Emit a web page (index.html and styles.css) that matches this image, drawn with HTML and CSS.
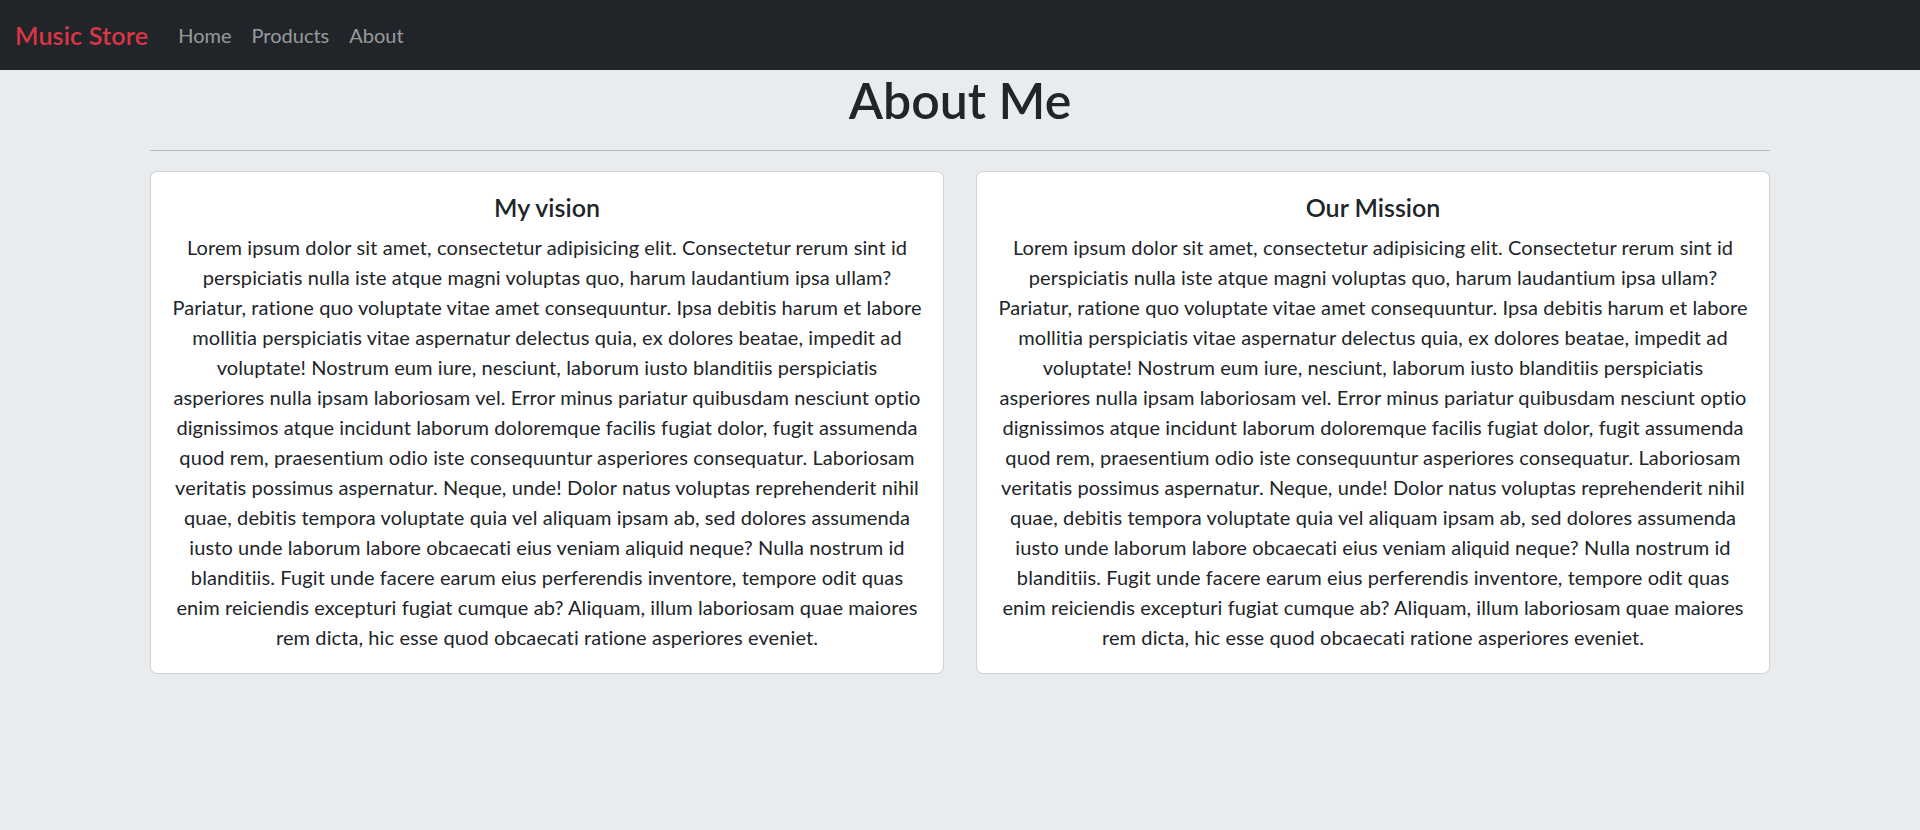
FILE: index.html
```html
<!DOCTYPE html>
<html lang="en">
<head>
<meta charset="utf-8">
<title>About - Music Store</title>
<link rel="stylesheet" href="styles.css">
</head>
<body>
<nav class="navbar">
  <a class="brand" href="#">Music Store</a>
  <ul class="nav-links">
    <li><a href="#">Home</a></li>
    <li><a href="#">Products</a></li>
    <li><a href="#">About</a></li>
  </ul>
</nav>
<main class="container">
  <h1 class="page-title">About Me</h1>
  <hr class="divider">
  <div class="cards">
    <section class="card">
      <h5 class="card-title">My vision</h5>
      <p class="card-text">Lorem ipsum dolor sit amet, consectetur adipisicing elit. Consectetur rerum sint id<br>
perspiciatis nulla iste atque magni voluptas quo, harum laudantium ipsa ullam?<br>
Pariatur, ratione quo voluptate vitae amet consequuntur. Ipsa debitis harum et labore<br>
mollitia perspiciatis vitae aspernatur delectus quia, ex dolores beatae, impedit ad<br>
voluptate! Nostrum eum iure, nesciunt, laborum iusto blanditiis perspiciatis<br>
asperiores nulla ipsam laboriosam vel. Error minus pariatur quibusdam nesciunt optio<br>
dignissimos atque incidunt laborum doloremque facilis fugiat dolor, fugit assumenda<br>
quod rem, praesentium odio iste consequuntur asperiores consequatur. Laboriosam<br>
veritatis possimus aspernatur. Neque, unde! Dolor natus voluptas reprehenderit nihil<br>
quae, debitis tempora voluptate quia vel aliquam ipsam ab, sed dolores assumenda<br>
iusto unde laborum labore obcaecati eius veniam aliquid neque? Nulla nostrum id<br>
blanditiis. Fugit unde facere earum eius perferendis inventore, tempore odit quas<br>
enim reiciendis excepturi fugiat cumque ab? Aliquam, illum laboriosam quae maiores<br>
rem dicta, hic esse quod obcaecati ratione asperiores eveniet.</p>
    </section>
    <section class="card">
      <h5 class="card-title">Our Mission</h5>
      <p class="card-text">Lorem ipsum dolor sit amet, consectetur adipisicing elit. Consectetur rerum sint id<br>
perspiciatis nulla iste atque magni voluptas quo, harum laudantium ipsa ullam?<br>
Pariatur, ratione quo voluptate vitae amet consequuntur. Ipsa debitis harum et labore<br>
mollitia perspiciatis vitae aspernatur delectus quia, ex dolores beatae, impedit ad<br>
voluptate! Nostrum eum iure, nesciunt, laborum iusto blanditiis perspiciatis<br>
asperiores nulla ipsam laboriosam vel. Error minus pariatur quibusdam nesciunt optio<br>
dignissimos atque incidunt laborum doloremque facilis fugiat dolor, fugit assumenda<br>
quod rem, praesentium odio iste consequuntur asperiores consequatur. Laboriosam<br>
veritatis possimus aspernatur. Neque, unde! Dolor natus voluptas reprehenderit nihil<br>
quae, debitis tempora voluptate quia vel aliquam ipsam ab, sed dolores assumenda<br>
iusto unde laborum labore obcaecati eius veniam aliquid neque? Nulla nostrum id<br>
blanditiis. Fugit unde facere earum eius perferendis inventore, tempore odit quas<br>
enim reiciendis excepturi fugiat cumque ab? Aliquam, illum laboriosam quae maiores<br>
rem dicta, hic esse quod obcaecati ratione asperiores eveniet.</p>
    </section>
  </div>
</main>
</body>
</html>
```

FILE: styles.css
```css
* { box-sizing: border-box; }

html, body {
  margin: 0;
  padding: 0;
}

body {
  background: #e9ecef;
  color: #212529;
  font-family: Lato, "Noto Sans", sans-serif;
  font-size: 20px;
  line-height: 30px;
  min-height: 830px;
}

.navbar {
  height: 70px;
  background: #212529;
  display: flex;
  align-items: center;
  padding: 0 15px;
}

.brand {
  color: #dc3545;
  font-size: 25px;
  line-height: 37px;
  font-weight: 600;
  letter-spacing: 0.2px;
  text-decoration: none;
  margin-right: 20px;
}

.nav-links {
  list-style: none;
  display: flex;
  margin: 0;
  padding: 0;
}

.nav-links a {
  display: block;
  padding: 10px 10px;
  color: rgba(255, 255, 255, 0.55);
  text-decoration: none;
  font-size: 20px;
  line-height: 30px;
}

.container {
  width: 1620px;
  margin: 0 auto;
}

.page-title {
  margin: 0 0 10px;
  font-size: 50px;
  line-height: 60px;
  font-weight: 600;
  text-align: center;
}

.divider {
  margin: 20px 0;
  border: 0;
  border-top: 1px solid rgba(33, 37, 41, 0.25);
}

.cards {
  display: grid;
  grid-template-columns: 1fr 1fr;
  gap: 32px;
}

.card {
  background: #fff;
  border: 1px solid rgba(0, 0, 0, 0.175);
  border-radius: 7px;
  padding: 20px 20px 21px;
  text-align: center;
}

.card-title {
  margin: 0 0 10px;
  font-size: 25px;
  line-height: 30px;
  font-weight: 600;
}

.card-text {
  margin: 0;
  letter-spacing: 0.1px;
  white-space: nowrap;
}
```
